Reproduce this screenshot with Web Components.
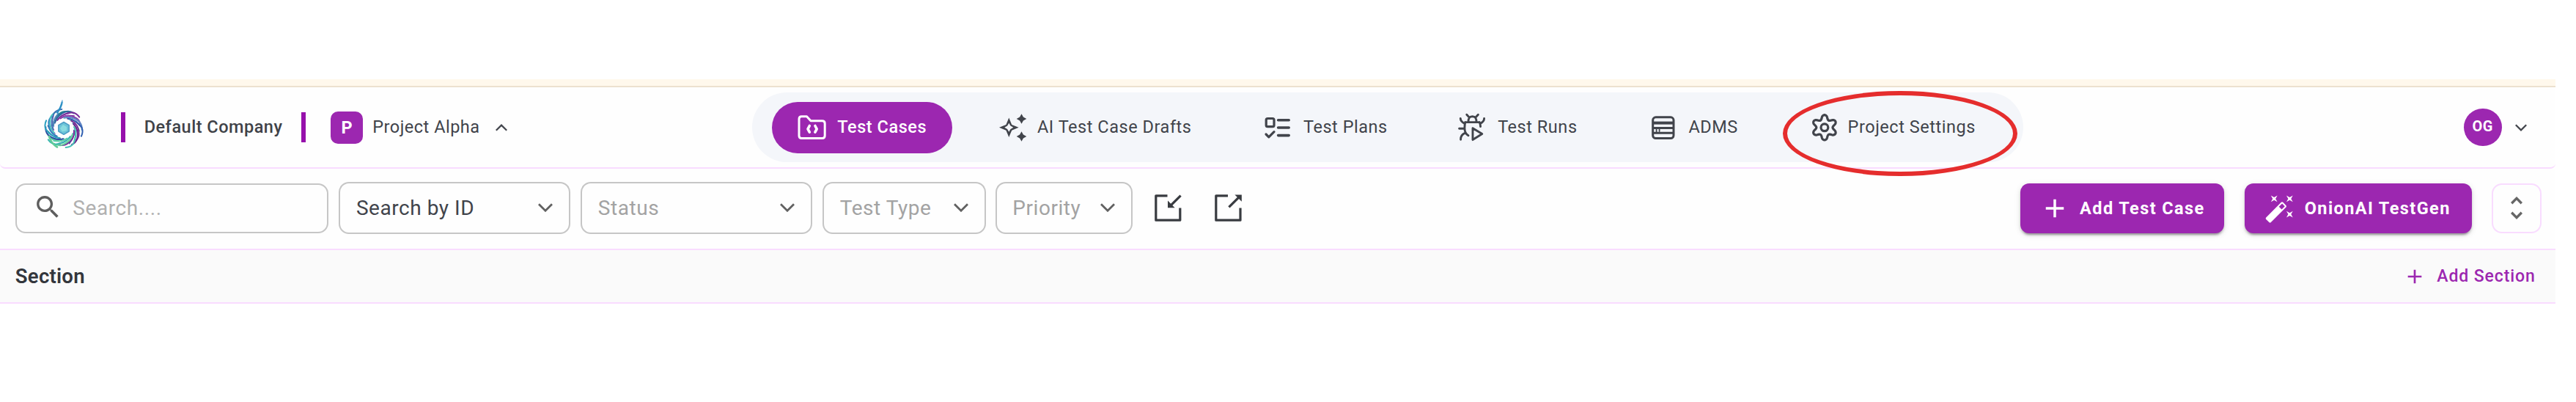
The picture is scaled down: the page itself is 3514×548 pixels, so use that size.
<!DOCTYPE html>
<html lang="en">
<head>
<meta charset="utf-8">
<title>Test Cases</title>
<style>
  body { margin: 0; background: #fff; font-family: Roboto, sans-serif; color: #41444b; }
</style>
</head>
<body>
<app-shell></app-shell>
<script>
const define = (name, html) => {
  const tpl = document.createElement('template');
  tpl.innerHTML = html;
  customElements.define(name, class extends HTMLElement {
    constructor() {
      super();
      this.attachShadow({ mode: 'open' }).append(tpl.content.cloneNode(true));
    }
  });
};

/* ---------- icons ---------- */
const star = (x, y, r, k) => `M${x} ${y - r}L${x + k} ${y - k}L${x + r} ${y}L${x + k} ${y + k}L${x} ${y + r}L${x - k} ${y + k}L${x - r} ${y}L${x - k} ${y - k}Z`;
const gear = (cx, cy) => {
  let d = '';
  for (let i = 0; i < 120; i++) {
    const a = i / 120 * Math.PI * 2, c = Math.cos(6 * a);
    const r = 14.1 + 3 * Math.sign(c) * Math.pow(Math.abs(c), 0.75);
    d += (i ? 'L' : 'M') + (cx + r * Math.sin(a)).toFixed(2) + ' ' + (cy - r * Math.cos(a)).toFixed(2);
  }
  return d + 'Z';
};
const line = (w, body) => `<g fill="none" stroke="currentColor" stroke-width="${w}" stroke-linecap="round" stroke-linejoin="round">${body}</g>`;
const ICONS = {
  folder: [60, 44, line(3, '<path d="M11.5 6.8H18.5L24 12.8H39.6Q43.2 12.8 43.2 16.4V33Q43.2 36.5 39.6 36.5H11.5Q8 36.5 8 33V10.3Q8 6.8 11.5 6.8Z"/><path d="M22.3 19.5L20 23.8L22.3 28.2M29.9 19.5L32.2 23.8L29.9 28.2" stroke-width="3.6"/>')],
  sparkle: [60, 44, `<path fill="currentColor" fill-rule="evenodd" d="${star(21.3, 21.8, 13.3, 3.9)}${star(21.3, 21.8, 6, 2.2)}"/><path fill="currentColor" d="${star(38.5, 10, 6.8, 2.4)}${star(38.5, 34, 6.8, 2.4)}"/>`],
  plans: [60, 44, line(3.2, '<rect x="9.2" y="9.5" width="10.8" height="11.2" rx="2"/><path d="M9 31L12.8 34.8L20 27.6"/><path stroke-width="3.6" d="M25.6 11.8H40.2M25.6 22H40.2M25.6 32.6H40.2"/>')],
  bug: [60, 44, line(2.9, '<path d="M17.8 4.2L20.6 7.4M33.4 4.2L30.4 7.4M20 14.5Q19.6 6.8 25.5 6.8Q31.4 6.8 31 14.5M15.8 14.6H35.2M15.8 14.6Q14.9 18 14.9 22.5Q14.9 30 20 32.8M35.2 14.6Q36.4 17 36.6 20.6M9.3 9.4Q9.2 13.6 15.2 16.6M41.6 9.4Q41.6 13.8 35.8 16.6M7.6 23.2H14.6M9.6 38.2Q9.4 32 15.4 29.4M26 22.8L38.8 30.6L26 38.6Z"/>')],
  server: [60, 44, line(3, '<rect x="11.7" y="7.8" width="28.3" height="28.8" rx="4"/><path stroke-linecap="butt" d="M12 22.4H40M12 29.2H40"/><path stroke-width="4" stroke-linecap="butt" d="M12 15.6H40"/><path stroke-width="1.8" d="M16.6 23V28M20.6 24V27"/>')],
  gear: [60, 44, line(3.2, `<path d="${gear(27.9, 21.8)}"/><circle cx="27.9" cy="21.8" r="4.9"/>`)],
  down: [20, 12, '<path fill="none" stroke="currentColor" stroke-width="2.8" d="M1 1.2L10 10.2L19 1.2"/>'],
  smallup: [16, 10, '<path fill="none" stroke="currentColor" stroke-width="2.2" d="M.8 8.8L8 1.6L15.2 8.8"/>'],
  smalldown: [16, 10, '<path fill="none" stroke="currentColor" stroke-width="2.2" d="M.8 1.2L8 8.4L15.2 1.2"/>'],
  sort: [16, 31, '<path fill="none" stroke="currentColor" stroke-width="3.4" d="M1.2 9.3L8 2.4L14.8 9.3M1.2 21.7L8 28.6L14.8 21.7"/>'],
  importer: [37, 37, '<path fill="none" stroke="currentColor" stroke-width="3.2" stroke-linejoin="round" d="M17.5 1.8H1.8V35.2H34.8V18.4M35.6 1.6L22 15.2"/><path fill="currentColor" d="M18 8.6L27.6 18.2H18Z"/>'],
  exporter: [37, 37, '<path fill="none" stroke="currentColor" stroke-width="3.2" stroke-linejoin="round" d="M18 1.8H1.8V35.2H35V18.4M19.4 17.4L33 3.8"/><path fill="currentColor" d="M27.4 .4H36.8V9.8Z"/>'],
  search: [24, 24, '<path fill="currentColor" d="M15.5 14h-.79l-.28-.27C15.41 12.59 16 11.11 16 9.5 16 5.91 13.09 3 9.5 3S3 5.91 3 9.5 5.91 16 9.5 16c1.61 0 3.09-.59 4.23-1.57l.27.28v.79l5 4.99L20.49 19l-4.99-5zm-6 0C7.01 14 5 11.99 5 9.5S7.01 5 9.5 5 14 7.01 14 9.5 11.99 14 9.5 14z"/>'],
  plus: [24, 24, '<path fill="currentColor" d="M19 13h-6v6h-2v-6H5v-2h6V5h2v6h6z"/>'],
  wand: [24, 24, '<path fill="currentColor" d="M7.5 5.6 10 7 8.6 4.5 10 2 7.5 3.4 5 2l1.4 2.5L5 7zm12 9.8L17 14l1.4 2.5L17 19l2.5-1.4L22 19l-1.4-2.5L22 14zM22 2l-2.5 1.4L17 2l1.4 2.5L17 7l2.5-1.4L22 7l-1.4-2.5zm-7.63 5.29a1 1 0 0 0-1.41 0L1.29 18.96c-.39.39-.39 1.02 0 1.41l2.34 2.34c.39.39 1.02.39 1.41 0L16.7 11.05c.39-.39.39-1.02 0-1.41zm-1.03 5.49-2.12-2.12 2.44-2.44 2.12 2.12z"/>']
};
customElements.define('ui-icon', class extends HTMLElement {
  connectedCallback() {
    const [w, h, body] = ICONS[this.getAttribute('name')];
    const size = this.getAttribute('size');
    this.attachShadow({ mode: 'open' }).innerHTML =
      `<style>:host{display:block;flex:none}svg{display:block}</style>
       <svg width="${size || w}" height="${size || h}" viewBox="0 0 ${w} ${h}">${body}</svg>`;
  }
});

/* ---------- swirl logo ---------- */
customElements.define('brand-logo', class extends HTMLElement {
  connectedCallback() {
    const cx = 27, cy = 39, pt = (r, deg) => {
      const a = deg * Math.PI / 180;
      return (cx + r * Math.sin(a)).toFixed(1) + ' ' + (cy - r * Math.cos(a)).toFixed(1);
    };
    const colors = ['#1f8a8c', '#2b6a9c', '#7b2d9b', '#8a3fae', '#5d86c4', '#2f5fb0', '#7d2a96', '#6a1f8c', '#45c0b4', '#7a2b98', '#67cf9a', '#3cb8b0', '#5fd0a0', '#2f4fa0', '#2a9fc0', '#2f7fc0', '#46c4c0', '#3f6fb4'];
    let s = '';
    colors.forEach((c, i) => {
      const a = i * 20, R = 23.2 + (i % 3) * 1.5;
      s += `<path stroke="${c}" d="M${pt(14.5, a - 75)}Q${pt(21, a - 45)} ${pt(R - 1.5, a - 12)}Q${pt(R + 1, a)} ${pt(R, a + 14)}"/>`;
      s += `<path stroke="${colors[(i + 5) % 18]}" stroke-width="1.5" d="M${pt(14, a - 60)}Q${pt(19, a - 36)} ${pt(22, a)}"/>`;
    });
    this.attachShadow({ mode: 'open' }).innerHTML = `<style>:host{display:block}svg{display:block}</style>
      <svg width="56" height="68" viewBox="0 0 56 68" fill="none" stroke-width="2" stroke-linecap="round">
        ${s}
        <path stroke="#2a8fc4" stroke-width="2.4" d="M24.6 3.5Q23.5 10 18.2 17.5"/>
        <path stroke="#4f9fd0" stroke-width="1.2" d="M25 .8L24.4 5"/>
        <path stroke="#62cc98" stroke-width="2.6" d="M7 50Q10 60 18 64.5"/>
        <path fill="#6cc4d8" stroke="#4a9cc4" stroke-width="1.5" stroke-linejoin="round" d="M27 30.5L34.2 34.6V43L27 47.3L19.8 43V34.6Z"/>
        <path fill="#8adbe0" d="M26 34L31 37V42L25 43.5L22 39Z"/>
      </svg>`;
  }
});

/* ---------- header ---------- */
define('nav-item', `
<style>
  :host { display: flex; align-items: center; box-sizing: border-box; height: 70px; padding-left: 29.7px;
    font-size: 23.5px; letter-spacing: .54px; white-space: nowrap; }
  :host([active]) { width: 246.4px; border-radius: 35px; background: #9c27b0; color: #fff; font-weight: 500; }
  span { padding-bottom: 1px; }
</style>
<slot name="icon"></slot><span><slot></slot></span>`);

define('main-nav', `
<style>
  :host { display: grid; grid-template-columns: 272.7px 363px 265.2px 260.3px 217.1px 1fr; align-items: center;
    box-sizing: border-box; width: 1733.6px; height: 94.6px; padding-left: 26.6px; border-radius: 48px; background: #f4f6fa; }
</style>
<nav-item active><ui-icon slot="icon" name="folder"></ui-icon>Test Cases</nav-item>
<nav-item><ui-icon slot="icon" name="sparkle"></ui-icon>AI Test Case Drafts</nav-item>
<nav-item><ui-icon slot="icon" name="plans"></ui-icon>Test Plans</nav-item>
<nav-item><ui-icon slot="icon" name="bug"></ui-icon>Test Runs</nav-item>
<nav-item><ui-icon slot="icon" name="server"></ui-icon>ADMS</nav-item>
<nav-item><ui-icon slot="icon" name="gear"></ui-icon>Project Settings</nav-item>`);

define('company-switcher', `
<style>
  :host { display: flex; align-items: center; font-size: 23.5px; letter-spacing: .5px; white-space: nowrap; }
  brand-logo { margin: 0 49px 8px 60px; }
  i { flex: none; width: 6px; height: 40.5px; background: #9610ab; }
  .company { width: 214px; padding: 0 0 1px 25.7px; font-weight: 500; color: #3f4248; }
  .p { display: grid; place-items: center; width: 44px; height: 44px; margin: 0 13.2px 0 34.4px; border-radius: 10px;
    background: #9c27b0; color: #fff; font-weight: 700; letter-spacing: 0; line-height: 42px; }
  .project { width: 167.4px; padding-bottom: 1px; }
</style>
<brand-logo></brand-logo><i></i><div class="company">Default Company</div><i></i>
<div class="p">P</div><div class="project">Project Alpha</div><ui-icon name="smallup"></ui-icon>`);

define('user-menu', `
<style>
  :host { display: flex; align-items: center; }
  div { display: grid; place-items: center; width: 51.5px; height: 51.5px; margin-right: 18px; border-radius: 50%;
    background: #9c27b0; color: #fff; font-size: 20px; font-weight: 700; letter-spacing: .6px; line-height: 48px; box-sizing: border-box; }
  span { padding-bottom: 3px; }
</style>
<div><span>OG</span></div><ui-icon name="smalldown"></ui-icon>`);

define('app-header', `
<style>
  :host { position: relative; display: flex; align-items: center; height: 109px; border-bottom: 2px solid #f9dcff;
    border-radius: 0 0 7px 7px; background: #fefefe; }
  company-switcher { flex: none; width: 1026px; }
  main-nav { flex: none; }
  user-menu { margin-left: auto; margin-right: 39.5px; }
  .ring { position: absolute; left: 2432px; top: 4.7px; width: 320.4px; height: 116.4px; box-sizing: border-box;
    border: 6px solid #e52d2d; border-radius: 50%; }
</style>
<company-switcher></company-switcher><main-nav></main-nav><user-menu></user-menu>
<div class="ring"></div>`);

/* ---------- toolbar ---------- */
define('search-box', `
<style>
  :host { display: flex; align-items: center; box-sizing: border-box; width: 427px; height: 67.7px; padding-left: 21.9px;
    border: 2px solid #c6c6c6; border-radius: 14px; font-size: 28px; letter-spacing: .58px; color: #b0b0b0; }
  ui-icon { color: #5e5e5e; margin: 0 14.2px 3px 0; }
  span { padding-bottom: 1px; }
</style>
<ui-icon name="search" size="40.6"></ui-icon><span><slot></slot></span>`);

define('select-box', `
<style>
  :host { display: flex; align-items: center; justify-content: space-between; box-sizing: border-box; height: 71.4px;
    padding: 0 22px 0 21.6px; border: 2px solid #c6c6c6; border-radius: 14px; font-size: 28px; letter-spacing: .55px;
    white-space: nowrap; color: #a3a3a3; }
  :host([filled]) { color: #41444b; }
  ui-icon { color: #616161; margin-bottom: 2px; }
  span { padding-bottom: 1px; }
</style>
<span><slot></slot></span><ui-icon name="down"></ui-icon>`);

define('solid-button', `
<style>
  :host { display: flex; align-items: center; box-sizing: border-box; height: 67.6px; border-radius: 12px; background: #9c27b0;
    color: #fff; font-size: 23.5px; font-weight: 700; letter-spacing: 1.4px; white-space: nowrap;
    box-shadow: 0 5px 2px -3px rgba(0,0,0,.2), 0 3px 3px rgba(0,0,0,.16), 0 2px 8px rgba(0,0,0,.12); }
</style>
<slot name="icon"></slot><slot></slot>`);

define('tool-bar', `
<style>
  :host { display: flex; align-items: center; height: 109px; box-sizing: border-box; padding: 0 19.3px 1.5px 20.7px; background: #fefefe; }
  .io { color: #383b40; }
  .add { width: 278.6px; padding-left: 26.2px; margin-left: auto; }
  .gen { width: 310.4px; padding-left: 27.3px; margin: 0 27px 0 27.4px; }
  .sort { display: grid; place-items: center; box-sizing: border-box; width: 67.6px; height: 67.6px; border: 2px solid #f9dcff;
    border-radius: 14px; color: #666; }
</style>
<search-box>Search....</search-box>
<select-box filled style="width:315.6px;margin-left:14.6px">Search by ID</select-box>
<select-box style="width:315.6px;margin-left:14.3px">Status</select-box>
<select-box style="width:222.4px;margin-left:14.4px">Test Type</select-box>
<select-box style="width:187.2px;margin-left:13.2px">Priority</select-box>
<ui-icon class="io" name="importer" style="margin-left:30.2px"></ui-icon>
<ui-icon class="io" name="exporter" style="margin-left:44.8px"></ui-icon>
<solid-button class="add"><ui-icon slot="icon" name="plus" size="42" style="margin-right:13.2px"></ui-icon>Add Test Case</solid-button>
<solid-button class="gen"><ui-icon slot="icon" name="wand" size="42.3" style="margin-right:12.4px"></ui-icon>OnionAI TestGen</solid-button>
<div class="sort"><ui-icon name="sort"></ui-icon></div>`);

/* ---------- section bar ---------- */
define('section-bar', `
<style>
  :host { display: flex; align-items: center; justify-content: space-between; height: 71px; padding: 0 27.3px 0 20.8px;
    border: solid #f9dcff; border-width: 2px 0; background: #fafafa; }
  h2 { margin: 0; padding-bottom: 1px; font-size: 27.5px; font-weight: 600; letter-spacing: .25px; color: #33363c; }
  .add { display: flex; align-items: center; gap: 14.5px; color: #9c27b0; font-size: 23px; font-weight: 500; letter-spacing: .9px; }
</style>
<h2>Section</h2>
<div class="add"><ui-icon name="plus" size="32"></ui-icon><span>Add Section</span></div>`);

define('app-shell', `
<style>
  :host { display: block; width: 3486px; padding-top: 108px; }
  .banner { height: 9px; background: #fff8ec; border-bottom: 2px solid #ece1cf; }
</style>
<div class="banner"></div>
<app-header></app-header>
<tool-bar></tool-bar>
<section-bar></section-bar>`);
</script>
</body>
</html>
